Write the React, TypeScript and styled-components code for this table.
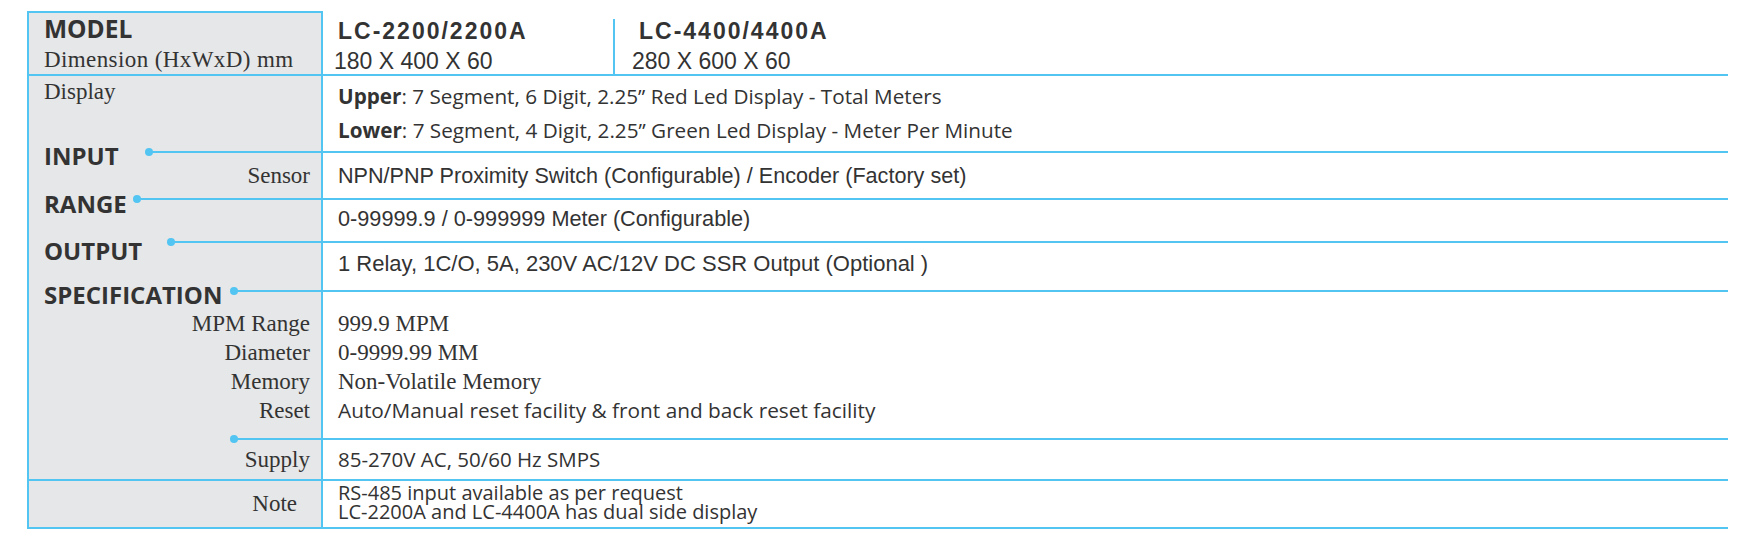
import React from 'react';
import styled, { createGlobalStyle } from 'styled-components';

const LINE = '#52c5f2';
const GREY = '#e6e7e8';
const INK = '#333333';

const GlobalStyle = createGlobalStyle`
  *, *::before, *::after { box-sizing: border-box; }
  body { margin: 0; background: #fff; color: ${INK}; }
`;

const Sheet = styled.div`
  width: 1701px;
  margin: 11px 0 0 27px;
  border-left: 2px solid ${LINE};
  border-bottom: 2px solid ${LINE};
`;

const Row = styled.div<{ $h: number; $rule?: boolean }>`
  display: flex;
  height: ${(p) => p.$h}px;
  border-top: ${(p) => (p.$rule ? `2px solid ${LINE}` : 'none')};
`;

const Side = styled.div<{ $cap?: boolean; $pad?: number }>`
  flex: 0 0 294px;
  display: flex;
  flex-direction: column;
  background: ${GREY};
  border-right: 2px solid ${LINE};
  border-top: ${(p) => (p.$cap ? `2px solid ${LINE}` : 'none')};
  padding: ${(p) => p.$pad ?? 0}px 0 0 15px;
`;

const Body = styled.div<{ $rule?: boolean; $pad?: number }>`
  flex: 1;
  display: flex;
  flex-direction: column;
  border-top: ${(p) => (p.$rule ? `2px solid ${LINE}` : 'none')};
  padding: ${(p) => p.$pad ?? 0}px 0 0 15px;
`;

const Models = styled.div`
  flex: 1;
  display: flex;
  margin-left: -15px;
`;

const ModelCol = styled.div<{ $first?: boolean }>`
  flex: ${(p) => (p.$first ? '0 0 290px' : '1')};
  padding-left: ${(p) => (p.$first ? 11 : 17)}px;
  border-left: ${(p) => (p.$first ? 'none' : `2px solid ${LINE}`)};
`;

const ModelName = styled.div<{ $indent: number }>`
  font: 700 23px/24px 'Liberation Sans', Arial, sans-serif;
  letter-spacing: 2px;
  padding-left: ${(p) => p.$indent}px;
`;

const ModelSize = styled.div`
  font: 23px/24px 'Liberation Sans', Arial, sans-serif;
  margin-top: 6px;
`;

const Model = styled.div`
  font: 700 24.5px/26px 'Open Sans', sans-serif;
`;

const Heading = styled.div<{ $lift: number }>`
  display: flex;
  align-items: flex-start;
  margin-top: ${(p) => -p.$lift}px;
`;

const Title = styled.span<{ $w: number }>`
  flex: 0 0 ${(p) => p.$w}px;
  font: 700 24px/18px 'Open Sans', sans-serif;
  white-space: nowrap;
`;

const Leader = styled.span<{ $lift: number }>`
  position: relative;
  flex: 1;
  height: 2px;
  margin-top: ${(p) => p.$lift}px;
  background: ${LINE};
  &::before {
    content: '';
    position: absolute;
    left: -4px;
    top: -3px;
    width: 8px;
    height: 8px;
    border-radius: 50%;
    background: ${LINE};
  }
`;

const Label = styled.div<{ $left?: boolean; $right?: number; $top?: number; $track?: number }>`
  font: 23px/29px 'Liberation Serif', 'Times New Roman', serif;
  letter-spacing: ${(p) => p.$track ?? 0}px;
  text-align: ${(p) => (p.$left ? 'left' : 'right')};
  padding-right: ${(p) => p.$right ?? 11}px;
  margin-top: ${(p) => p.$top ?? 0}px;
  white-space: nowrap;
`;

type Face = 'arial' | 'open' | 'serif' | 'note';

const faces: Record<Face, string> = {
  arial: `font: 21.7px/26px 'Liberation Sans', Arial, sans-serif;`,
  open: `font: 20.8px/29px 'Open Sans', sans-serif;`,
  serif: `font: 23px/29px 'Liberation Serif', 'Times New Roman', serif;`,
  note: `font: 20px/19px 'Open Sans', sans-serif;`,
};

const Value = styled.div<{ $face: Face; $size?: number }>`
  ${(p) => faces[p.$face]}
  ${(p) => (p.$size ? `font-size: ${p.$size}px;` : '')}
  white-space: nowrap;
`;

const DisplayLine = styled.div`
  font: 20.7px/34px 'Open Sans', sans-serif;
  white-space: nowrap;
  b {
    font-weight: 700;
  }
`;

const specs: [string, string, Face][] = [
  ['MPM Range', '999.9 MPM', 'serif'],
  ['Diameter', '0-9999.99 MM', 'serif'],
  ['Memory', 'Non-Volatile Memory', 'serif'],
  ['Reset', 'Auto/Manual reset facility & front and back reset facility', 'open'],
];

export default function App() {
  return (
    <>
      <GlobalStyle />
      <Sheet>
        <Row $h={63}>
          <Side $cap $pad={3}>
            <Model>MODEL</Model>
            <Label $left $track={0.4} $top={3}>
              Dimension (HxWxD) mm
            </Label>
          </Side>
          <Body $pad={8}>
            <Models>
              <ModelCol $first>
                <ModelName $indent={4}>LC-2200/2200A</ModelName>
                <ModelSize>180 X 400 X 60</ModelSize>
              </ModelCol>
              <ModelCol>
                <ModelName $indent={7}>LC-4400/4400A</ModelName>
                <ModelSize>280 X 600 X 60</ModelSize>
              </ModelCol>
            </Models>
          </Body>
        </Row>

        <Row $h={77} $rule>
          <Side $pad={1}>
            <Label $left>Display</Label>
          </Side>
          <Body $pad={3}>
            <DisplayLine>
              <b>Upper</b>: 7 Segment, 6 Digit, 2.25” Red Led Display - Total Meters
            </DisplayLine>
            <DisplayLine>
              <b>Lower</b>: 7 Segment, 4 Digit, 2.25” Green Led Display - Meter Per Minute
            </DisplayLine>
          </Body>
        </Row>

        <Row $h={47}>
          <Side>
            <Heading $lift={4}>
              <Title $w={105}>INPUT</Title>
              <Leader $lift={4} />
            </Heading>
            <Label $top={-4}>Sensor</Label>
          </Side>
          <Body $rule $pad={9.5}>
            <Value $face="arial" $size={21.6}>
              NPN/PNP Proximity Switch (Configurable) / Encoder (Factory set)
            </Value>
          </Body>
        </Row>

        <Row $h={43}>
          <Side>
            <Heading $lift={3}>
              <Title $w={93}>RANGE</Title>
              <Leader $lift={3} />
            </Heading>
          </Side>
          <Body $rule $pad={5.5}>
            <Value $face="arial">0-99999.9 / 0-999999 Meter (Configurable)</Value>
          </Body>
        </Row>

        <Row $h={49}>
          <Side>
            <Heading $lift={-1}>
              <Title $w={127}>OUTPUT</Title>
              <Leader $lift={-1} />
            </Heading>
          </Side>
          <Body $rule $pad={7.5}>
            <Value $face="arial" $size={22}>
              1 Relay, 1C/O, 5A, 230V AC/12V DC SSR Output (Optional )
            </Value>
          </Body>
        </Row>

        <Row $h={148}>
          <Side>
            <Heading $lift={4}>
              <Title $w={190}>SPECIFICATION</Title>
              <Leader $lift={4} />
            </Heading>
            {specs.map(([label], i) => (
              <Label key={label} $top={i === 0 ? 5 : 0}>
                {label}
              </Label>
            ))}
          </Side>
          <Body $rule $pad={16.7}>
            {specs.map(([label, value, face]) => (
              <Value key={label} $face={face}>
                {value}
              </Value>
            ))}
          </Body>
        </Row>

        <Row $h={41}>
          <Side>
            <Heading $lift={0}>
              <Title $w={190} />
              <Leader $lift={0} />
            </Heading>
            <Label $top={4.5}>Supply</Label>
          </Side>
          <Body $rule $pad={4.5}>
            <Value $face="open" $size={20.5}>
              85-270V AC, 50/60 Hz SMPS
            </Value>
          </Body>
        </Row>

        <Row $h={48} $rule>
          <Side $pad={8.4}>
            <Label $right={24}>Note</Label>
          </Side>
          <Body $pad={1.7}>
            <Value $face="note">RS-485 input available as per request</Value>
            <Value $face="note">LC-2200A and LC-4400A has dual side display</Value>
          </Body>
        </Row>
      </Sheet>
    </>
  );
}
